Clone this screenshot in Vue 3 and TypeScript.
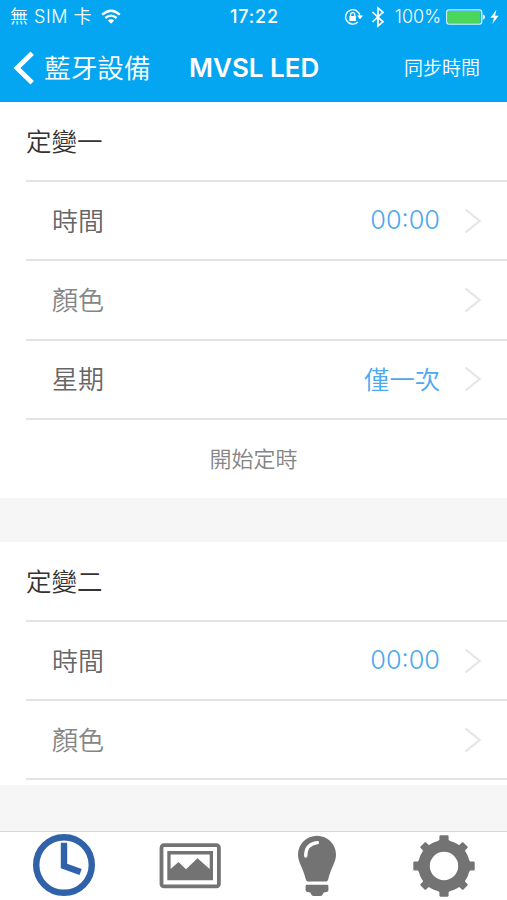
<script setup lang="ts">
interface Row {
  label: string
  value?: string
  muted?: boolean
}

interface Timer {
  title: string
  rows: Row[]
  action?: string
}

const timers: Timer[] = [
  {
    title: '定變一',
    rows: [
      { label: '時間', value: '00:00' },
      { label: '顏色', muted: true },
      { label: '星期', value: '僅一次' },
    ],
    action: '開始定時',
  },
  {
    title: '定變二',
    rows: [
      { label: '時間', value: '00:00' },
      { label: '顏色', muted: true },
    ],
  },
]

const straightTeeth = [0, 90, 180, 270]
const diagonalTeeth = [45, 135, 225, 315]
</script>

<template>
  <div class="screen">
    <header class="header">
      <div class="status">
        <div class="carrier">
          <span>無 SIM 卡</span>
          <svg class="wifi" width="20" height="16" viewBox="0 0 20 16">
            <g fill="none" stroke="#fff" stroke-width="2.3">
              <path d="M1.2 5.6 Q10 -2.2 18.8 5.6" />
              <path d="M4.3 9 Q10 4.2 15.7 9" />
            </g>
            <path d="M6.8 11.5 Q10 9 13.2 11.5 L10 14.8 Z" fill="#fff" />
          </svg>
        </div>
        <span class="clock">17:22</span>
        <div class="indicators">
          <svg width="20" height="18" viewBox="0 0 20 18">
            <path d="M15.9 8.2 A7.2 7.2 0 1 0 13.8 14" fill="none" stroke="#fff" stroke-width="1.4" />
            <path d="M13 7.4 H19 L16 11.2 Z" fill="#fff" />
            <rect x="5.4" y="8" width="6.6" height="5" rx=".6" fill="#fff" />
            <path d="M6.6 8.4 V6.8 a2.1 2.1 0 0 1 4.2 0 V8.4" fill="none" stroke="#fff" stroke-width="1.2" />
          </svg>
          <svg class="bluetooth" width="14" height="22" viewBox="0 0 14 22">
            <path d="M1.5 6 L12 15.8 L7 20 V2 L12 6.2 L1.5 16" fill="none" stroke="#fff" stroke-width="1.7" />
          </svg>
          <span class="percent">100%</span>
          <svg class="battery" width="40" height="18" viewBox="0 0 40 18">
            <rect x=".7" y="1.8" width="35" height="14.4" rx="2.4" fill="none" stroke="#d6f1ff" stroke-width="1.3" />
            <rect x="2" y="3.1" width="32.4" height="11.8" rx="1" fill="#4bd75b" />
            <path d="M36.8 6.3 Q39 6.8 39 9 T36.8 11.7 Z" fill="#fff" />
          </svg>
          <svg class="bolt" width="9" height="16" viewBox="0 0 9 16">
            <path d="M6.5 .8 L.4 8.8 H4 L2.3 15 L8.6 6.8 H5 Z" fill="#fff" />
          </svg>
        </div>
      </div>
      <nav class="navbar">
        <div class="back">
          <svg width="22" height="34" viewBox="0 0 22 34">
            <path d="M19.2 2.2 L4 17 L19.2 31.8" fill="none" stroke="#fff" stroke-width="4.8" />
          </svg>
          <span class="back-label">藍牙設備</span>
        </div>
        <h1 class="title">MVSL LED</h1>
        <span class="sync">同步時間</span>
      </nav>
    </header>

    <main class="content">
      <section v-for="timer in timers" :key="timer.title" class="timer">
        <h2 class="timer-title">{{ timer.title }}</h2>
        <div v-for="row in timer.rows" :key="row.label" class="row" :class="{ muted: row.muted }">
          <span class="label">{{ row.label }}</span>
          <span class="value">{{ row.value }}</span>
          <svg class="chevron" width="18" height="28" viewBox="0 0 18 28">
            <path d="M1.5 2.5 L15.7 14 L1.5 25.5" fill="none" stroke="#e6e6e6" stroke-width="2.2" />
          </svg>
        </div>
        <div v-if="timer.action" class="action">{{ timer.action }}</div>
      </section>
    </main>

    <footer class="tabs">
      <div class="tab clock-tab">
        <svg width="64" height="64" viewBox="0 0 64 64">
          <circle cx="32" cy="32" r="27.8" fill="none" stroke="#2f62a8" stroke-width="6.4" />
          <path d="M32 9.8 V33 L48.6 39" fill="none" stroke="#2f62a8" stroke-width="6.4" />
        </svg>
      </div>
      <div class="tab">
        <svg width="64" height="64" viewBox="0 0 64 64">
          <rect x="3.5" y="11.2" width="57.4" height="41.2" rx="2.5" fill="none" stroke="#737373" stroke-width="3.8" />
          <path d="M9.3 16.9 H55 V46.2 H9.3 Z M12.6 20.6 V34.9 L20.5 27.9 L28 35.3 L39.5 24.2 L51.7 34.9 V20.6 Z" fill="#737373" fill-rule="evenodd" />
        </svg>
      </div>
      <div class="tab">
        <svg width="64" height="64" viewBox="0 0 64 64">
          <path d="M32 1.8 C42.5 1.8 51 10.1 51 20.5 C51 28.5 46 33.5 43.3 45 Q42.8 47.4 41.5 47.4 H22.5 Q21.2 47.4 20.7 45 C18 33.5 13 28.5 13 20.5 C13 10.1 21.5 1.8 32 1.8 Z" fill="#737373" />
          <path d="M32.4 8.7 Q20.6 10 20.7 22" fill="none" stroke="#fff" stroke-width="3.3" stroke-linecap="round" />
          <path d="M22 50.8 H42 Q43.4 50.8 43.4 52.2 V56.2 Q43.4 57.8 41.5 58 L38.7 58.5 L37.2 61.2 Q36.6 62 35.5 62 H28.5 Q27.4 62 26.8 61.2 L25.3 58.5 L22.5 58 Q20.6 57.8 20.6 56.2 V52.2 Q20.6 50.8 22 50.8 Z" fill="#737373" />
        </svg>
      </div>
      <div class="tab">
        <svg width="64" height="64" viewBox="0 0 64 64">
          <circle cx="32" cy="32" r="20" fill="none" stroke="#737373" stroke-width="11.6" />
          <g fill="#737373">
            <path v-for="a in straightTeeth" :key="a" d="M24 9 L27.4 5.8 V2.4 Q27.4 1.3 28.5 1.3 H35.5 Q36.6 1.3 36.6 2.4 V5.8 L40 9 Z" :transform="`rotate(${a} 32 32)`" />
            <path v-for="a in diagonalTeeth" :key="a" d="M25 10 L28.1 6 V2.8 Q28.1 1.7 29.2 1.7 H34.8 Q35.9 1.7 35.9 2.8 V6 L39 10 Z" :transform="`rotate(${a} 32 32)`" />
          </g>
        </svg>
      </div>
    </footer>
  </div>
</template>

<style>
body {
  margin: 0;
  overflow: hidden;
}
</style>

<style scoped>
.screen {
  width: 507px;
  height: 900px;
  display: flex;
  flex-direction: column;
  overflow: hidden;
  background: #f6f6f6;
  font-family: Inter, "Noto Sans CJK TC", sans-serif;
  font-weight: 350;
}

.header {
  height: 102px;
  flex: none;
  background: #04a5f1;
  color: #fff;
}

.status {
  height: 34px;
  display: grid;
  grid-template-columns: 1fr auto 1fr;
  align-items: center;
  padding: 0 8px 0 10px;
  font-size: 18px;
  line-height: 34px;
}

.carrier,
.indicators {
  display: flex;
  align-items: center;
}

.carrier {
  letter-spacing: 0.5px;
}

.wifi {
  margin-left: 9px;
}

.clock {
  font-weight: 500;
  letter-spacing: 0.8px;
}

.indicators {
  justify-content: flex-end;
}

.bluetooth {
  margin-left: 7px;
}

.percent {
  margin-left: 10px;
}

.battery {
  margin-left: 5px;
}

.bolt {
  margin-left: 4px;
}

.navbar {
  height: 68px;
  display: grid;
  grid-template-columns: 176px 1fr auto;
  align-items: center;
  padding: 0 27px 0 13px;
  box-sizing: border-box;
}

.back {
  display: flex;
  align-items: center;
  gap: 9px;
  font-size: 26.7px;
}

.back-label,
.sync {
  padding-bottom: 3px;
}

.title {
  margin: 0;
  padding-bottom: 2px;
  font-size: 26px;
  font-weight: 600;
}

.sync {
  font-size: 19px;
}

.content {
  flex: 1;
  min-height: 0;
  display: flex;
  flex-direction: column;
  gap: 44px;
}

.timer {
  flex: none;
  background: #fff;
}

.timer:last-child {
  padding-bottom: 5px;
}

.timer-title,
.row {
  margin: 0 0 0 26px;
  height: 79.3px;
  box-sizing: border-box;
  border-bottom: 2px solid #e3e3e3;
  font-size: 26px;
  font-weight: 350;
}

.timer-title {
  height: 80px;
  color: #333;
  font-size: 25.5px;
  line-height: 79px;
}

.row {
  display: flex;
  align-items: center;
  padding: 0 25px 0 26px;
  color: #666;
}

.row.muted {
  color: #858585;
}

.label {
  padding-bottom: 3px;
}

.value {
  margin-left: auto;
  margin-right: 24px;
  padding-bottom: 2px;
  font-size: 25.3px;
  color: #4aa9f0;
}

.action {
  height: 78px;
  line-height: 78px;
  text-align: center;
  font-size: 22px;
  color: #858585;
}

.tabs {
  height: 69px;
  flex: none;
  box-sizing: border-box;
  border-top: 1px solid #d8d8d8;
  background: #fff;
  display: grid;
  grid-template-columns: repeat(4, 1fr);
}

.tab {
  display: flex;
  justify-content: center;
  align-items: center;
}

.clock-tab {
  padding: 0 0 2px 1px;
}
</style>
